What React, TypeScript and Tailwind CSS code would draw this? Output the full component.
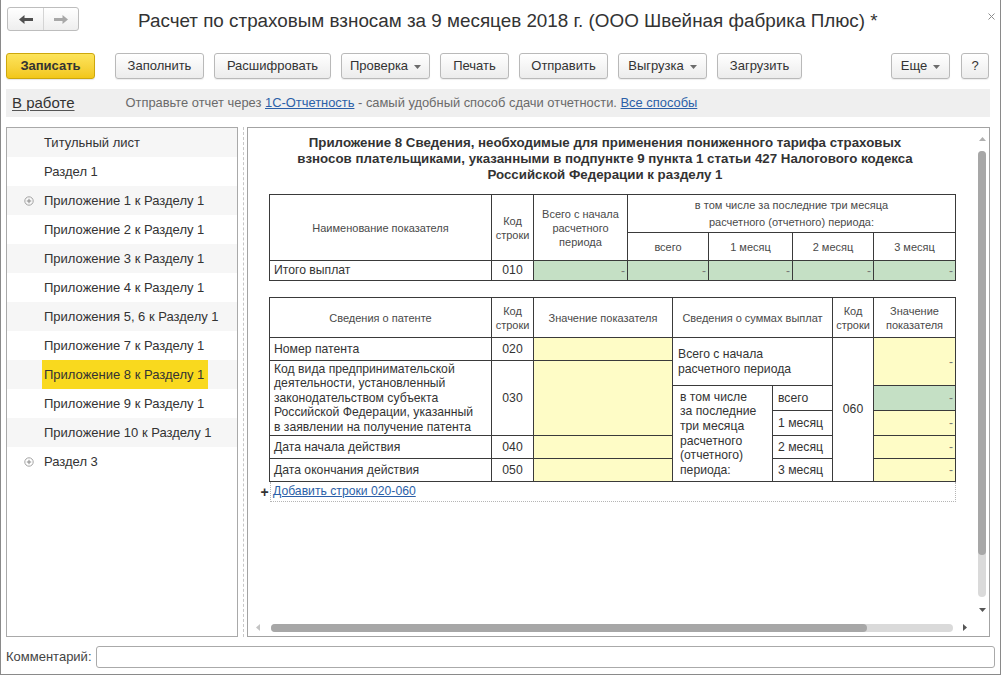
import React from 'react';

function Caret() {
  return (
    <svg width="7" height="4" viewBox="0 0 7 4" className="ml-[6px] mt-[1px]">
      <path d="M0 0h7L3.5 4z" fill="#6b6b6b" />
    </svg>
  );
}

function ToolButton({ className, children, menu }: { className: string; children: React.ReactNode; menu?: boolean }) {
  return (
    <div
      className={`h-[26px] flex items-center justify-center rounded-[3px] border border-[#b9b9b9] bg-linear-to-b from-white to-[#ececec] shadow-[0_1px_1px_rgba(0,0,0,0.07)] text-[13px] text-[#333] ${className}`}
    >
      {children}
      {menu && <Caret />}
    </div>
  );
}

function PlusIcon() {
  return (
    <svg width="10" height="10" viewBox="0 0 10 10">
      <circle cx="5" cy="5" r="4.2" fill="none" stroke="#a3a3a3" strokeWidth="1" />
      <path d="M2.8 5h4.4M5 2.8v4.4" stroke="#8a8a8a" strokeWidth="1" />
    </svg>
  );
}

const TREE = [
  { t: 'Титульный лист' },
  { t: 'Раздел 1' },
  { t: 'Приложение 1 к Разделу 1', plus: true },
  { t: 'Приложение 2 к Разделу 1' },
  { t: 'Приложение 3 к Разделу 1' },
  { t: 'Приложение 4 к Разделу 1' },
  { t: 'Приложения 5, 6 к Разделу 1' },
  { t: 'Приложение 7 к Разделу 1' },
  { t: 'Приложение 8 к Разделу 1', active: true },
  { t: 'Приложение 9 к Разделу 1' },
  { t: 'Приложение 10 к Разделу 1' },
  { t: 'Раздел 3', plus: true },
];

// общие стили ячеек
const cell = 'border-r border-b border-[#3a3a3a]';
const head = 'text-[11px] leading-[14px] text-[#4a4a4a] text-center';
const data = 'text-[12.2px] text-[#333]';
const dash = 'flex items-center justify-end pr-[2px] text-[12px] text-[#777]';

export default function App() {
  return (
    <div className="w-[1003px] h-[676px] bg-white [font-family:'Liberation_Sans',Arial,sans-serif]">
      <div className="w-[1001px] h-[675px] border-l border-r border-b border-[#8a8a8a] flex flex-col">
        {/* заголовок */}
        <div className="mt-[7px] h-[24px] flex items-center pl-[6px]">
          <div className="w-[72px] h-[24px] flex rounded-[3px] border border-[#bdbdbd] bg-linear-to-b from-white to-[#eeeeee]">
            <div className="w-[36px] flex items-center justify-center border-r border-[#d4d4d4]">
              <svg width="14" height="9" viewBox="0 0 14 9">
                <path d="M0 4.5L5.5 0v3h8.5v3H5.5v3z" fill="#505050" />
              </svg>
            </div>
            <div className="flex-1 flex items-center justify-center">
              <svg width="14" height="9" viewBox="0 0 14 9">
                <path d="M14 4.5L8.5 0v3H0v3h8.5v3z" fill="#a8a8a8" />
              </svg>
            </div>
          </div>
          <div className="ml-[59px] mt-[4px] text-[18.85px] text-[#333] whitespace-nowrap">
            Расчет по страховым взносам за 9 месяцев 2018 г. (ООО Швейная фабрика Плюс) *
          </div>
          <div className="ml-auto mr-[5px] self-start mt-[6px]">
            <svg width="7" height="7" viewBox="0 0 7 7">
              <path d="M0.5 0.5l6 6M6.5 0.5l-6 6" stroke="#8c8c8c" strokeWidth="1" />
            </svg>
          </div>
        </div>

        {/* панель кнопок */}
        <div className="mt-[22px] h-[26px] flex pl-[5px]">
          <div className="w-[89px] h-[26px] flex items-center justify-center rounded-[3px] border border-[#cda70c] bg-linear-to-b from-[#fde45a] to-[#f2c716] text-[13px] font-bold text-[#333] shadow-[0_1px_1px_rgba(0,0,0,0.1)]">
            Записать
          </div>
          <ToolButton className="ml-[20px] w-[89px]">Заполнить</ToolButton>
          <ToolButton className="ml-[10px] w-[117px]">Расшифровать</ToolButton>
          <ToolButton className="ml-[10px] w-[89px]" menu>Проверка</ToolButton>
          <ToolButton className="ml-[10px] w-[69px]">Печать</ToolButton>
          <ToolButton className="ml-[10px] w-[89px]">Отправить</ToolButton>
          <ToolButton className="ml-[10px] w-[89px]" menu>Выгрузка</ToolButton>
          <ToolButton className="ml-[10px] w-[85px]">Загрузить</ToolButton>
          <ToolButton className="ml-[89px] w-[59px]" menu>Еще</ToolButton>
          <ToolButton className="ml-[11px] w-[28px]">?</ToolButton>
        </div>

        {/* строка состояния */}
        <div className="mt-[10px] ml-[5px] w-[984px] h-[28px] bg-[#efefef] flex items-center pl-[6px]">
          <span className="text-[15px] text-[#333] underline underline-offset-2 decoration-[#555]">В работе</span>
          <span className="ml-[51px] text-[12.9px] text-[#6a6a6a]">
            Отправьте отчет через{' '}
            <span className="text-[#2b5fa8] underline">1С-Отчетность</span> - самый удобный способ сдачи отчетности.{' '}
            <span className="text-[#2b5fa8] underline">Все способы</span>
          </span>
        </div>

        {/* основная область */}
        <div className="mt-[10px] h-[510px] flex pl-[5px]">
          {/* дерево разделов */}
          <div className="w-[232px] h-full border border-[#a9a9a9]">
            {TREE.map((it, i) => (
              <div key={it.t} className={`h-[29px] flex items-center pl-[17px] ${i % 2 === 0 ? 'bg-[#f6f6f6]' : 'bg-white'}`}>
                <div className="w-[10px] h-[10px] flex items-center justify-center">{it.plus && <PlusIcon />}</div>
                <div
                  className={`ml-[8px] h-full flex items-center pl-[2px] text-[13px] text-[#333] whitespace-nowrap ${
                    it.active ? 'w-[166px] bg-[#f9d91e]' : ''
                  }`}
                >
                  {it.t}
                </div>
              </div>
            ))}
          </div>

          <div className="ml-[5px] h-full border-l border-dashed border-[#c8c8c8]" />

          {/* форма отчета */}
          <div className="ml-[3px] w-[743px] h-full border border-[#a3a3a3] flex flex-col">
            <div className="flex-1 flex min-h-0">
              <div className="flex-1 min-w-0 overflow-hidden">
                <div className="pt-[7px] ml-[14px] w-[686px] text-center text-[13.3px] leading-[16px] font-bold text-[#333]">
                  Приложение 8 Сведения, необходимые для применения пониженного тарифа страховых
                  <br />
                  взносов плательщиками, указанными в подпункте 9 пункта 1 статьи 427 Налогового кодекса
                  <br />
                  Российской Федерации к разделу 1
                </div>

                {/* таблица 1 */}
                <div className="mt-[11px] ml-[21px] w-[687px] grid grid-cols-[222px_42px_94px_81px_84px_81px_82px] grid-rows-[38px_28px_20px] border-l border-t border-[#3a3a3a]">
                  <div className={`${cell} ${head} col-start-1 row-start-1 row-span-2 flex items-center justify-center`}>
                    Наименование показателя
                  </div>
                  <div className={`${cell} ${head} col-start-2 row-start-1 row-span-2 flex items-center justify-center`}>
                    Код
                    <br />
                    строки
                  </div>
                  <div className={`${cell} ${head} col-start-3 row-start-1 row-span-2 flex items-center justify-center`}>
                    Всего с начала
                    <br />
                    расчетного
                    <br />
                    периода
                  </div>
                  <div className={`${cell} ${head} leading-[17px] col-start-4 col-span-4 row-start-1 flex items-center justify-center`}>
                    в том числе за последние три месяца
                    <br />
                    расчетного (отчетного) периода:
                  </div>
                  {['всего', '1 месяц', '2 месяц', '3 месяц'].map((m) => (
                    <div key={m} className={`${cell} ${head} row-start-2 flex items-center justify-center`}>
                      {m}
                    </div>
                  ))}
                  <div className={`${cell} ${data} col-start-1 row-start-3 flex items-center pl-[4px]`}>Итого выплат</div>
                  <div className={`${cell} ${data} col-start-2 row-start-3 flex items-center justify-center`}>010</div>
                  {[0, 1, 2, 3, 4].map((k) => (
                    <div key={k} className={`${cell} ${dash} row-start-3 bg-[#c5e0c5]`}>
                      -
                    </div>
                  ))}
                </div>

                {/* таблица 2 */}
                <div className="mt-[16px] ml-[21px] w-[687px] grid grid-cols-[222px_42px_139px_100px_60px_41px_82px] grid-rows-[40px_23px_25px_25px_25px_23px_23px] border-l border-t border-[#3a3a3a]">
                  <div className={`${cell} ${head} col-start-1 row-start-1 flex items-center justify-center`}>Сведения о патенте</div>
                  <div className={`${cell} ${head} col-start-2 row-start-1 flex items-center justify-center`}>
                    Код
                    <br />
                    строки
                  </div>
                  <div className={`${cell} ${head} col-start-3 row-start-1 flex items-center justify-center`}>Значение показателя</div>
                  <div className={`${cell} ${head} col-start-4 col-span-2 row-start-1 flex items-center justify-center`}>
                    Сведения о суммах выплат
                  </div>
                  <div className={`${cell} ${head} col-start-6 row-start-1 flex items-center justify-center`}>
                    Код
                    <br />
                    строки
                  </div>
                  <div className={`${cell} ${head} col-start-7 row-start-1 flex items-center justify-center`}>
                    Значение
                    <br />
                    показателя
                  </div>

                  {/* левая часть */}
                  <div className={`${cell} ${data} col-start-1 row-start-2 flex items-center pl-[4px]`}>Номер патента</div>
                  <div className={`${cell} ${data} col-start-2 row-start-2 flex items-center justify-center`}>020</div>
                  <div className={`${cell} col-start-3 row-start-2 bg-[#fefcc6]`} />
                  <div className={`${cell} ${data} leading-[14.5px] col-start-1 row-start-3 row-span-3 flex items-center pl-[4px]`}>
                    <div>
                      Код вида предпринимательской
                      <br />
                      деятельности, установленный
                      <br />
                      законодательством субъекта
                      <br />
                      Российской Федерации, указанный
                      <br />
                      в заявлении на получение патента
                    </div>
                  </div>
                  <div className={`${cell} ${data} col-start-2 row-start-3 row-span-3 flex items-center justify-center`}>030</div>
                  <div className={`${cell} col-start-3 row-start-3 row-span-3 bg-[#fefcc6]`} />
                  <div className={`${cell} ${data} col-start-1 row-start-6 flex items-center pl-[4px]`}>Дата начала действия</div>
                  <div className={`${cell} ${data} col-start-2 row-start-6 flex items-center justify-center`}>040</div>
                  <div className={`${cell} col-start-3 row-start-6 bg-[#fefcc6]`} />
                  <div className={`${cell} ${data} col-start-1 row-start-7 flex items-center pl-[4px]`}>Дата окончания действия</div>
                  <div className={`${cell} ${data} col-start-2 row-start-7 flex items-center justify-center`}>050</div>
                  <div className={`${cell} col-start-3 row-start-7 bg-[#fefcc6]`} />

                  {/* правая часть */}
                  <div className={`${cell} ${data} leading-[14.5px] col-start-4 col-span-2 row-start-2 row-span-2 flex items-center pl-[5px]`}>
                    <div>
                      Всего с начала
                      <br />
                      расчетного периода
                    </div>
                  </div>
                  <div className={`${cell} ${data} leading-[14.6px] col-start-4 row-start-4 row-span-4 flex items-center pl-[7px]`}>
                    <div>
                      в том числе
                      <br />
                      за последние
                      <br />
                      три месяца
                      <br />
                      расчетного
                      <br />
                      (отчетного)
                      <br />
                      периода:
                    </div>
                  </div>
                  <div className={`${cell} ${data} col-start-5 row-start-4 flex items-center pl-[5px]`}>всего</div>
                  <div className={`${cell} ${data} col-start-5 row-start-5 flex items-center pl-[5px]`}>1 месяц</div>
                  <div className={`${cell} ${data} col-start-5 row-start-6 flex items-center pl-[5px]`}>2 месяц</div>
                  <div className={`${cell} ${data} col-start-5 row-start-7 flex items-center pl-[5px]`}>3 месяц</div>
                  <div className={`${cell} ${data} col-start-6 row-start-2 row-span-6 flex items-center justify-center`}>060</div>
                  <div className={`${cell} ${dash} col-start-7 row-start-2 row-span-2 bg-[#fefcc6]`}>-</div>
                  <div className={`${cell} ${dash} col-start-7 row-start-4 bg-[#c5e0c5]`}>-</div>
                  <div className={`${cell} ${dash} col-start-7 row-start-5 bg-[#fefcc6]`}>-</div>
                  <div className={`${cell} ${dash} col-start-7 row-start-6 bg-[#fefcc6]`}>-</div>
                  <div className={`${cell} ${dash} col-start-7 row-start-7 bg-[#fefcc6]`}>-</div>
                </div>

                {/* добавить строки */}
                <div className="ml-[11px] flex">
                  <div className="w-[11px] h-[20px] flex items-center justify-center text-[14px] font-bold text-[#333]">+</div>
                  <div className="w-[686px] h-[20px] flex items-center pl-[2px] border-l border-r border-b border-dotted border-[#b5b5b5]">
                    <span className="text-[12.2px] text-[#2b5fa8] underline">Добавить строки 020-060</span>
                  </div>
                </div>
              </div>

              {/* вертикальная прокрутка */}
              <div className="w-[14px] flex flex-col items-center pt-[9px]">
                <svg width="7" height="4" viewBox="0 0 7 4">
                  <path d="M0 4h7L3.5 0z" fill="#b0b0b0" />
                </svg>
                <div className="mt-[10px] w-[8px] h-[446px] rounded-full bg-[#dadada]">
                  <div className="w-[8px] h-[404px] rounded-full bg-[#a7a7a7]" />
                </div>
                <svg width="7" height="4" viewBox="0 0 7 4" className="mt-[11px]">
                  <path d="M0 0h7L3.5 4z" fill="#555" />
                </svg>
              </div>
            </div>

            {/* горизонтальная прокрутка */}
            <div className="h-[17px] flex items-center pl-[8px]">
              <svg width="4" height="7" viewBox="0 0 4 7">
                <path d="M4 0v7L0 3.5z" fill="#c4c4c4" />
              </svg>
              <div className="ml-[11px] w-[682px] h-[8px] rounded-full bg-[#dadada]">
                <div className="w-[596px] h-[8px] rounded-full bg-[#a7a7a7]" />
              </div>
              <svg width="4" height="7" viewBox="0 0 4 7" className="ml-[10px]">
                <path d="M0 0v7L4 3.5z" fill="#555" />
              </svg>
            </div>
          </div>
        </div>

        {/* комментарий */}
        <div className="mt-[9px] h-[22px] flex items-center pl-[5px]">
          <span className="text-[13px] text-[#444]">Комментарий:</span>
          <div className="ml-[4px] w-[899px] h-[22px] rounded-[3px] border border-[#aaaaaa] bg-white" />
        </div>
      </div>
    </div>
  );
}
